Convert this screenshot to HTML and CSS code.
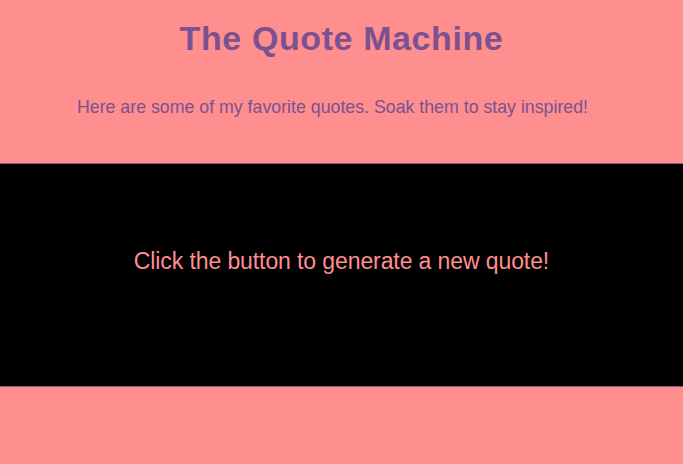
FILE: index.html
```html
<!DOCTYPE html>
<html>
<head>
<meta charset="utf-8">
<link rel="stylesheet" href="styles.css">
<title>The Quote Machine</title>
</head>
<body>
<header class="header">
  <h1 class="title">The Quote Machine</h1>
  <p class="subtitle">Here are some of my favorite quotes. Soak them to stay inspired!</p>
</header>
<section class="quote-box">
  <p class="quote">Click the button to generate a new quote!</p>
</section>
</body>
</html>
```
FILE: styles.css
```css
html, body {
  margin: 0;
  padding: 0;
  background: #ff8e8e;
  font-family: "Liberation Sans", Arial, Helvetica, sans-serif;
}
.header {
  display: flex;
  flex-direction: column;
  align-items: center;
  padding-top: 18px;
  height: 144px;
  box-sizing: border-box;
}
.title {
  margin: 0;
  font-size: 34px;
  line-height: 40px;
  font-weight: bold;
  color: #7b5190;
  letter-spacing: 0.6px;
}
.subtitle {
  margin: 39px 0 0;
  padding-right: 18px;
  font-size: 17.75px;
  color: #7b5190;
}
.quote-box {
  background: #000;
  border-top: 1px solid #8a5a8e;
  border-bottom: 1px solid #8a5a8e;
  height: 222px;
  box-sizing: content-box;
  display: flex;
  justify-content: center;
  align-items: flex-start;
  margin-top: 19px;
}
.quote {
  margin: 84px 0 0;
  font-size: 23px;
  letter-spacing: -0.1px;
  color: #ff8e8e;
}
```
